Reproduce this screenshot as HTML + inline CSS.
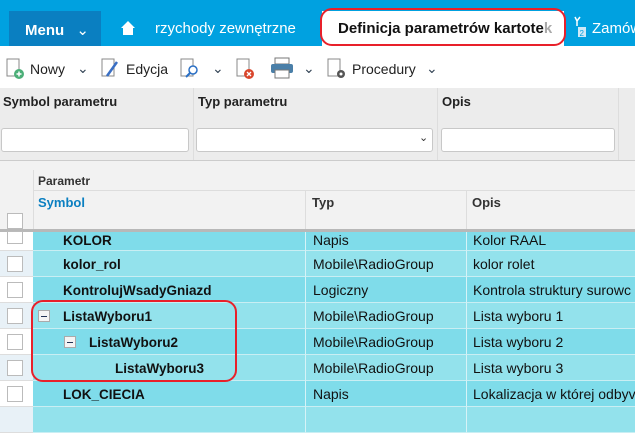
<!DOCTYPE html>
<html><head><meta charset="utf-8"><style>
*{box-sizing:border-box;margin:0;padding:0}
body{width:635px;height:411px;overflow:hidden;background:#fff;font-family:"Liberation Sans",Arial,sans-serif;position:relative}
.abs{position:absolute}
.top{left:0;top:0;width:635px;height:46px;background:#00a1e0}
.menu{left:9px;top:11px;width:92px;height:35px;background:#0a7fc1;color:#fff;font-weight:bold;font-size:15px;padding:10px 0 0 16px}
.t{font-size:15px;white-space:nowrap}
.tb{font-size:14px;color:#222;white-space:nowrap}
.flt{left:0;top:88px;width:635px;height:72px;background:#ececec}
.inp{background:#fff;border:1px solid #c8c8c8;border-radius:3px;height:24px;top:128px}
.lbl{font-size:13px;font-weight:bold;color:#222;top:94px}
.hdr{left:0;top:160px;width:635px;height:71px;background:#f2f2f2;border-top:1px solid #ccc}
.row{position:absolute;left:0;width:635px;height:26px;font-size:14px;color:#111}
.row .ck{position:absolute;left:0;top:0;width:33px;height:26px;background:#f2f2f2;border-bottom:1px solid #ddd}
.row .ck i{position:absolute;left:7px;top:5px;width:16px;height:16px;background:#fff;border:1px solid #bbb}
.row .c{position:absolute;top:0;height:26px;border-bottom:1px solid #c9eef3;line-height:26px;white-space:nowrap;overflow:hidden}
.row .s{left:33px;width:272px;font-weight:bold;font-size:13.5px;line-height:27px}
.ty{left:305px;width:161px;padding-left:7px;border-left:1px solid #d6f3f7}
.op{left:466px;width:169px;padding-left:6px;border-left:1px solid #d6f3f7}
.a .c{background:#7fdcea}.b .c{background:#93e2ec}
.b .ck{background:#e8f1f7}
.ex{position:absolute;top:7px;width:12px;height:12px;background:#f4f4f4;border:1px solid #aaa}
.ex:after{content:"";position:absolute;left:2px;top:5px;width:6px;height:1px;background:#235}
</style></head><body>
<div class="abs top"></div>
<div class="abs menu">Menu <span style="font-weight:normal;margin-left:8px">&#8964;</span></div>
<svg class="abs" style="left:120px;top:20px" width="16" height="16"><path d="M1 8 L8 1 L15 8 L13 8 L13 15 L3 15 L3 8Z" fill="#fff"/></svg>
<div class="abs t" style="left:155px;top:20px;color:#fff">rzychody zewnętrzne</div>
<div class="abs" style="left:322px;top:11px;width:242px;height:35px;background:#fff"></div>
<div class="abs t" style="left:338px;top:20px;font-weight:bold;color:#111;width:214px;overflow:hidden">Definicja parametrów kartote<span style="color:#aaa">k</span></div>
<div class="abs" style="left:320px;top:8px;width:246px;height:38px;border:2px solid #e8202a;border-radius:12px"></div>
<svg class="abs" style="left:573px;top:16px" width="14" height="22"><path d="M2 1 L4 5 L7 1 M4 5 L4 10" stroke="#fff" stroke-width="1.5" fill="none"/><rect x="5" y="11" width="8" height="10" fill="#cfe9f7"/><text x="6.5" y="20" font-size="8" fill="#00a1e0" font-family="Liberation Sans">2</text></svg>
<div class="abs t" style="left:592px;top:20px;color:#fff">Zamów</div>

<svg class="abs" style="left:6px;top:58px" width="20" height="22"><rect x="1" y="1" width="12" height="17" fill="#fff" stroke="#888"/><circle cx="13" cy="16" r="5" fill="#4caf78"/><path d="M10.5 16h5M13 13.5v5" stroke="#fff" stroke-width="1.5"/></svg>
<div class="abs tb" style="left:30px;top:61px">Nowy</div>
<div class="abs tb" style="left:77px;top:60px;color:#345">&#8964;</div>
<svg class="abs" style="left:101px;top:58px" width="20" height="22"><rect x="1" y="1" width="12" height="17" fill="#fff" stroke="#888"/><path d="M6 18 L16 4" stroke="#3a6fc4" stroke-width="2.5"/></svg>
<div class="abs tb" style="left:126px;top:61px">Edycja</div>
<svg class="abs" style="left:180px;top:58px" width="22" height="22"><rect x="1" y="1" width="12" height="17" fill="#fff" stroke="#888"/><circle cx="13" cy="12" r="4" fill="#fff" stroke="#2a6fc4" stroke-width="1.5"/><path d="M10 15 L6 19" stroke="#2a6fc4" stroke-width="2"/></svg>
<div class="abs tb" style="left:212px;top:60px;color:#345">&#8964;</div>
<svg class="abs" style="left:236px;top:58px" width="20" height="22"><rect x="1" y="1" width="12" height="17" fill="#fff" stroke="#888"/><circle cx="13" cy="16" r="5" fill="#d9462c"/><path d="M11 14l4 4M15 14l-4 4" stroke="#fff" stroke-width="1.3"/></svg>
<svg class="abs" style="left:270px;top:57px" width="24" height="22"><rect x="5" y="1" width="14" height="6" fill="#fff" stroke="#777"/><rect x="1" y="7" width="22" height="9" rx="2" fill="#4a7fa8"/><rect x="5" y="13" width="14" height="8" fill="#fff" stroke="#777"/></svg>
<div class="abs tb" style="left:303px;top:60px;color:#345">&#8964;</div>
<svg class="abs" style="left:327px;top:58px" width="20" height="22"><rect x="1" y="1" width="12" height="17" fill="#fff" stroke="#888"/><circle cx="14" cy="16" r="4" fill="#555"/><circle cx="14" cy="16" r="1.5" fill="#fff"/></svg>
<div class="abs tb" style="left:352px;top:61px">Procedury</div>
<div class="abs tb" style="left:426px;top:60px;color:#345">&#8964;</div>

<div class="abs flt"></div>
<div class="abs" style="left:193px;top:88px;width:1px;height:72px;background:#ddd"></div>
<div class="abs" style="left:437px;top:88px;width:1px;height:72px;background:#ddd"></div>
<div class="abs" style="left:618px;top:88px;width:1px;height:72px;background:#ddd"></div>
<div class="abs lbl" style="left:3px">Symbol parametru</div>
<div class="abs lbl" style="left:198px">Typ parametru</div>
<div class="abs lbl" style="left:442px">Opis</div>
<div class="abs inp" style="left:1px;width:188px"></div>
<div class="abs inp" style="left:196px;width:237px"></div>
<div class="abs" style="left:419px;top:131px;font-size:11px;color:#333">&#8964;</div>
<div class="abs inp" style="left:441px;width:174px"></div>

<div class="abs hdr"></div>
<div class="abs" style="left:33px;top:170px;width:602px;height:61px;border-left:1px solid #ddd"></div>
<div class="abs" style="left:33px;top:190px;width:602px;height:1px;background:#ddd"></div>
<div class="abs" style="left:305px;top:190px;width:1px;height:41px;background:#ddd"></div>
<div class="abs" style="left:466px;top:190px;width:1px;height:41px;background:#ddd"></div>
<div class="abs" style="left:38px;top:174px;font-size:12px;font-weight:bold;color:#333">Parametr</div>
<div class="abs" style="left:38px;top:195px;font-size:13px;font-weight:bold;color:#0a7fc1">Symbol</div>
<div class="abs" style="left:312px;top:195px;font-size:13px;font-weight:bold;color:#333">Typ</div>
<div class="abs" style="left:472px;top:195px;font-size:13px;font-weight:bold;color:#333">Opis</div>
<div class="abs" style="left:7px;top:213px;width:16px;height:16px;background:#fff;border:1px solid #bbb"></div>
<div class="abs" style="left:0;top:229px;width:635px;height:3px;background:#b8b8b8"></div>

<div class="row a" style="top:232px;height:19px"><div class="ck" style="height:19px;background:#fff"><i style="top:-1px;height:13px"></i></div><div class="c s" style="height:19px;line-height:18px;padding-left:30px">KOLOR</div><div class="c ty" style="height:19px;line-height:17px">Napis</div><div class="c op" style="height:19px;line-height:17px">Kolor RAAL</div></div>
<div class="row b" style="top:251px"><div class="ck"><i></i></div><div class="c s" style="padding-left:30px">kolor_rol</div><div class="c ty">Mobile\RadioGroup</div><div class="c op">kolor rolet</div></div>
<div class="row a" style="top:277px"><div class="ck" style="background:#fff"><i></i></div><div class="c s" style="padding-left:30px">KontrolujWsadyGniazd</div><div class="c ty">Logiczny</div><div class="c op">Kontrola struktury surowc</div></div>
<div class="row b" style="top:303px"><div class="ck"><i></i></div><div class="c s" style="padding-left:30px"><span class="ex" style="left:5px"></span>ListaWyboru1</div><div class="c ty">Mobile\RadioGroup</div><div class="c op">Lista wyboru 1</div></div>
<div class="row a" style="top:329px"><div class="ck" style="background:#fff"><i></i></div><div class="c s" style="padding-left:56px"><span class="ex" style="left:31px"></span>ListaWyboru2</div><div class="c ty">Mobile\RadioGroup</div><div class="c op">Lista wyboru 2</div></div>
<div class="row b" style="top:355px"><div class="ck"><i></i></div><div class="c s" style="padding-left:82px">ListaWyboru3</div><div class="c ty">Mobile\RadioGroup</div><div class="c op">Lista wyboru 3</div></div>
<div class="row a" style="top:381px"><div class="ck" style="background:#fff"><i></i></div><div class="c s" style="padding-left:30px">LOK_CIECIA</div><div class="c ty">Napis</div><div class="c op">Lokalizacja w której odbyv</div></div>
<div class="row b" style="top:407px"><div class="ck"></div><div class="c s"></div><div class="c ty"></div><div class="c op"></div></div>
<div class="abs" style="left:31px;top:300px;width:206px;height:82px;border:2px solid #e8202a;border-radius:12px"></div>
</body></html>
